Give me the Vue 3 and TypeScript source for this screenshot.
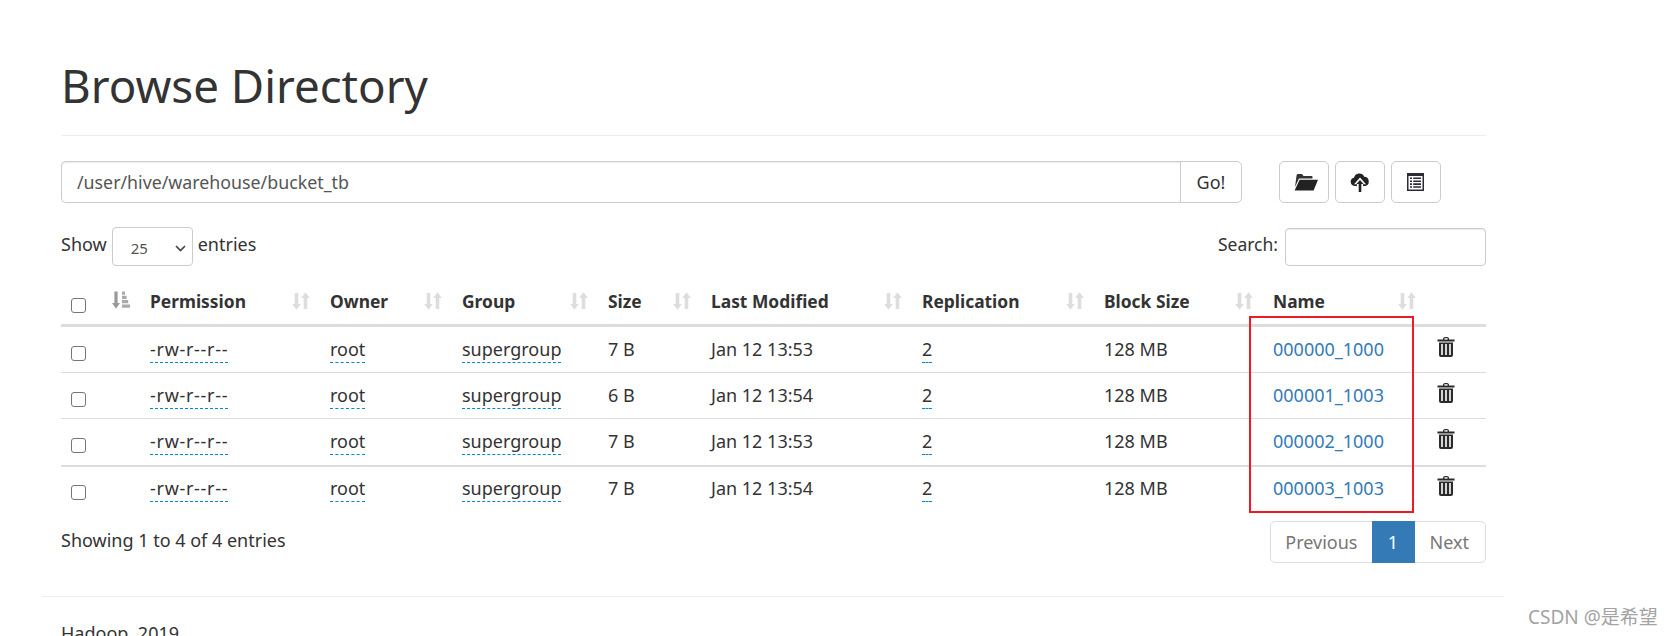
<script setup lang="ts">
interface Entry {
  size: string
  modified: string
  name: string
}

const entries: Entry[] = [
  { size: '7 B', modified: 'Jan 12 13:53', name: '000000_1000' },
  { size: '6 B', modified: 'Jan 12 13:54', name: '000001_1003' },
  { size: '7 B', modified: 'Jan 12 13:53', name: '000002_1000' },
  { size: '7 B', modified: 'Jan 12 13:54', name: '000003_1003' },
]

const columns = ['Permission', 'Owner', 'Group', 'Size', 'Last Modified', 'Replication', 'Block Size', 'Name']
</script>

<template>
  <div class="page">
    <div class="content">
      <h1 class="title">Browse Directory</h1>

      <div class="toolbar">
        <div class="path-group">
          <input class="path-input" type="text" value="/user/hive/warehouse/bucket_tb" />
          <button class="go-btn">Go!</button>
        </div>
        <div class="actions">
          <button class="icon-btn">
            <svg class="icon-folder" width="24" height="18" viewBox="0 0 24 18">
              <path fill="#333" d="M1 14 L2.6 2.2 Q2.8 1 4 1 H8 L9.5 3 H17.5 Q18.5 3 18.5 4 V5.5 H5 L1 14z" />
              <path fill="#222" d="M5.6 6.8 H24 L19.6 17.5 H0.6z" />
            </svg>
          </button>
          <button class="icon-btn">
            <svg width="20" height="20" viewBox="0 0 20 20">
              <path fill="#222" d="M4.6 14 A4.2 4.2 0 0 1 4 5.7 A5.4 5.4 0 0 1 14.2 4.8 A4.7 4.7 0 0 1 15.4 14z" />
              <path fill="#fff" d="M10 5.6 L16 12.2 H13 V14 H7 V12.2 H4z" />
              <path fill="#222" d="M10 8 L13.6 12 H11.3 V20 H8.7 V12 H6.4z" />
            </svg>
          </button>
          <button class="icon-btn">
            <svg class="icon-list" width="17" height="18" viewBox="0 0 17 18">
              <rect width="17" height="18" fill="#2b2b33" />
              <rect x="1.5" y="3" width="14" height="13.5" fill="#fff" />
              <path fill="#2b2b33" d="M3 4.5h2v1.6H3zM6.2 4.5H14v1.6H6.2zM3 7.4h2V9H3zM6.2 7.4H14V9H6.2zM3 10.3h2v1.6H3zM6.2 10.3H14v1.6H6.2zM3 13.2h2v1.6H3zM6.2 13.2H14v1.6H6.2z" />
            </svg>
          </button>
        </div>
      </div>

      <div class="filters">
        <label class="length">
          Show
          <span class="select-wrap">
            <select class="length-select">
              <option>25</option>
            </select>
            <svg class="chevron" width="11" height="7" viewBox="0 0 11 7">
              <path d="M1 1 L5.5 5.5 L10 1" fill="none" stroke="#444" stroke-width="1.7" />
            </svg>
          </span>
          entries
        </label>
        <label class="search">
          Search:
          <input class="search-input" type="text" />
        </label>
      </div>

      <div class="table-wrap">
        <table class="listing">
          <colgroup>
            <col class="c-check" />
            <col class="c-perm" />
            <col class="c-owner" />
            <col class="c-group" />
            <col class="c-size" />
            <col class="c-date" />
            <col class="c-repl" />
            <col class="c-block" />
            <col class="c-name" />
            <col class="c-del" />
          </colgroup>
          <thead>
            <tr>
              <th>
                <input class="check" type="checkbox" />
                <svg class="sort sort-active" width="18" height="18" viewBox="0 0 18 18">
                  <path fill="#999" d="M2.4 0.5h3.2v11.5h2.4L4 17.8 0 12h2.4z" />
                  <path fill="#aaa" d="M10 0.5h3v3.2h-3zM10 4.8h4.6v3.2H10zM10 9.1h6.2v3.2H10zM10 13.4H18v3.4h-8z" />
                </svg>
              </th>
              <th v-for="col in columns" :key="col">
                {{ col }}
                <svg class="sort" width="18" height="18" viewBox="0 0 18 18">
                  <path fill="#ddd" d="M2.7 1h3.6v11h2.5L4.5 17.8 0.2 12h2.5zM11.7 17V6H9.2L13.5 0.2 17.8 6h-2.5v11z" />
                </svg>
              </th>
              <th></th>
            </tr>
          </thead>
          <tbody>
            <tr v-for="entry in entries" :key="entry.name">
              <td><input class="check" type="checkbox" /></td>
              <td><span class="editable perm">-rw-r--r--</span></td>
              <td><span class="editable">root</span></td>
              <td><span class="editable">supergroup</span></td>
              <td>{{ entry.size }}</td>
              <td>{{ entry.modified }}</td>
              <td><span class="editable">2</span></td>
              <td>128 MB</td>
              <td><a class="file-link" href="#">{{ entry.name }}</a></td>
              <td>
                <svg class="trash" width="18" height="20" viewBox="0 0 18 20">
                  <path fill="#2b2b2b" d="M6 1.5 Q6.3 0 8 0 H10 Q11.7 0 12 1.5 V2.6 H17.5 V4.4 H0.5 V2.6 H6z" />
                  <path fill="#2b2b2b" d="M2 5.4 H16 V18 Q16 20 14 20 H4 Q2 20 2 18z" />
                  <path fill="#fff" d="M4.2 7h1.6v11H4.2zM8.2 7h1.6v11H8.2zM12.2 7h1.6v11h-1.6z" />
                  <path fill="#fff" d="M7.4 1.2h3.2v1.4H7.4z" />
                </svg>
              </td>
            </tr>
          </tbody>
        </table>
        <div class="highlight"></div>
      </div>

      <div class="table-foot">
        <span>Showing 1 to 4 of 4 entries</span>
        <div class="pager">
          <a class="page-item prev">Previous</a>
          <a class="page-item current">1</a>
          <a class="page-item next">Next</a>
        </div>
      </div>
    </div>

    <footer class="footer">Hadoop, 2019</footer>
    <div class="watermark">CSDN @是希望</div>
  </div>
</template>

<style>
html,
body {
  margin: 0;
  height: 100%;
  overflow: hidden;
  background: #fff;
}
</style>

<style scoped>
.page {
  position: relative;
  width: 1674px;
  height: 636px;
  overflow: hidden;
  font-family: 'Noto Sans', 'Noto Sans CJK SC', sans-serif;
  font-size: 18px;
  color: #333;
}

.content {
  width: 1425px;
  margin-left: 61px;
}

.title {
  margin: 0;
  padding-top: 52px;
  height: 83px;
  border-bottom: 1px solid #eee;
  font-size: 45.7px;
  line-height: 66px;
  font-weight: 400;
  box-sizing: content-box;
}

.toolbar {
  display: flex;
  margin-top: 25px;
  height: 42px;
}

.path-group {
  display: flex;
  width: 1181px;
}

.path-input {
  flex: 1;
  min-width: 0;
  box-sizing: border-box;
  padding: 0 15px;
  border: 1px solid #ccc;
  border-right: 0;
  border-radius: 5px 0 0 5px;
  font: inherit;
  font-size: 17.8px;
  color: #555;
  box-shadow: inset 0 1px 1px rgba(0, 0, 0, 0.075);
}

.go-btn {
  width: 62px;
  border: 1px solid #ccc;
  border-radius: 0 5px 5px 0;
  background: #fff;
  font: inherit;
  color: #333;
  padding: 0;
}

.actions {
  display: flex;
  gap: 6px;
  margin-left: 37px;
}

.icon-btn {
  display: flex;
  align-items: center;
  justify-content: center;
  width: 50px;
  border: 1px solid #ccc;
  border-radius: 5px;
  background: #fff;
  padding: 0;
}

.icon-folder {
  margin-left: 3px;
}

.icon-list {
  margin-right: 1px;
}

.filters {
  display: flex;
  justify-content: space-between;
  align-items: flex-start;
  margin-top: 24px;
  height: 39px;
}

.length,
.search {
  display: flex;
  align-items: flex-start;
  line-height: 34px;
}

.search {
  font-size: 17.5px;
}

.select-wrap {
  position: relative;
  display: block;
  margin: 0 5px;
  height: 39px;
}

.length-select {
  appearance: none;
  display: block;
  box-sizing: border-box;
  width: 81px;
  height: 39px;
  padding: 2px 18px 0;
  border: 1px solid #ccc;
  border-radius: 4px;
  background: #fff;
  font: inherit;
  font-size: 15px;
  color: #555;
}

.chevron {
  position: absolute;
  right: 7px;
  top: 18px;
}

.search-input {
  box-sizing: border-box;
  width: 201px;
  height: 38px;
  margin: 1px 0 0 7px;
  border: 1px solid #ccc;
  border-radius: 4px;
  box-shadow: inset 0 1px 1px rgba(0, 0, 0, 0.075);
}

.table-wrap {
  position: relative;
  margin-top: 12px;
}

.listing {
  width: 100%;
  table-layout: fixed;
  border-collapse: collapse;
}

.c-check { width: 79px; }
.c-perm { width: 180px; }
.c-owner { width: 132px; }
.c-group { width: 146px; }
.c-size { width: 103px; }
.c-date { width: 211px; }
.c-repl { width: 182px; }
.c-block { width: 169px; }
.c-name { width: 163px; }
.c-del { width: 60px; }

.listing th,
.listing td {
  position: relative;
  padding: 0 10px;
  text-align: left;
  white-space: nowrap;
}

.listing th {
  height: 46px;
  font-size: 17.4px;
  font-weight: 700;
  border-bottom: 3px solid #ddd;
}

.listing td {
  box-sizing: border-box;
  height: 46px;
  padding-bottom: 1px;
  border-bottom: 1px solid #ddd;
}

.listing tbody tr:nth-child(odd) td {
  height: 47px;
}

.listing tbody tr:nth-child(3) td {
  border-bottom: 2px solid #ddd;
}

.listing tbody tr:last-child td {
  height: 45px;
  border-bottom: 0;
}

.check {
  appearance: none;
  display: block;
  box-sizing: border-box;
  width: 15px;
  height: 15px;
  margin: 9px 0 0;
  border: 1.5px solid #767676;
  border-radius: 3px;
  background: #fff;
}

.sort {
  position: absolute;
  right: 10px;
  top: 14px;
}

.sort-active {
  right: 10px;
  top: 13px;
}

.editable {
  border-bottom: 1px dashed #08c;
  padding-bottom: 1px;
}

.perm {
  letter-spacing: 0.7px;
}

.file-link {
  color: #337ab7;
  text-decoration: none;
}

.trash {
  display: block;
  margin: -4px 0 0 1px;
}

.highlight {
  position: absolute;
  left: 1188px;
  top: 38px;
  width: 161px;
  height: 193px;
  border: 2px solid #ed1c24;
  pointer-events: none;
}

.table-foot {
  display: flex;
  justify-content: space-between;
  align-items: flex-start;
  margin-top: 9px;
  line-height: 40px;
}

.pager {
  display: flex;
  height: 42px;
  margin-top: 1px;
  box-sizing: border-box;
  border: 1px solid #ddd;
  border-radius: 5px;
  color: #777;
}

.page-item {
  display: block;
  padding: 0 15px;
  line-height: 40px;
}

.page-item.prev {
  padding: 0 14px;
}

.page-item.next {
  padding: 0 16px 0 15px;
}

.page-item.current {
  width: 43px;
  box-sizing: border-box;
  padding: 0;
  margin: -1px 0;
  line-height: 42px;
  text-align: center;
  background: #337ab7;
  color: #fff;
}

.footer {
  box-sizing: border-box;
  width: 1462px;
  margin: 33px 0 0 42px;
  padding: 24px 19px;
  border-top: 1px solid #eee;
}

.watermark {
  position: absolute;
  left: 1528px;
  top: 602px;
  font-size: 19px;
  color: #a3a3a3;
  white-space: nowrap;
}
</style>
